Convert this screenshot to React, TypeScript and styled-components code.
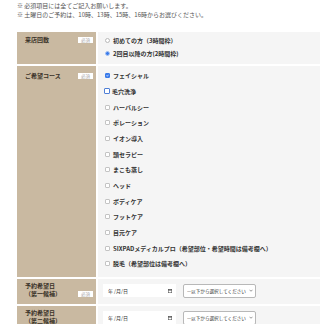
import React from 'react';
import styled, { createGlobalStyle } from 'styled-components';

const GlobalStyle = createGlobalStyle`
    html, body {
        margin: 0;
        padding: 0;
        background: #fff;
    }
    body {
        font-family: "Noto Sans CJK JP", "Noto Sans", sans-serif;
        color: #333;
    }
`;

const Page = styled.div`
    width: 320px;
    overflow: hidden;
`;

const Notes = styled.div`
    padding: 1px 0 0 17px;
    font-size: 6px;
    line-height: 9px;
    color: #555;
    white-space: nowrap;
`;

const Table = styled.div`
    margin: 13px 0 0 17px;
    display: flex;
    flex-direction: column;
    gap: 2px;
`;

const Row = styled.div`
    display: grid;
    grid-template-columns: 79px 1fr;
    column-gap: 2px;
`;

const LabelCell = styled.div<{ $pt: number }>`
    background: #c9b9a1;
    padding: ${p => p.$pt}px 3px 3px 8px;
    display: flex;
    align-items: flex-start;
`;

const LabelHead = styled.div`
    width: 100%;
    display: flex;
    justify-content: space-between;
    align-items: flex-end;
    font-size: 6px;
    line-height: 8px;
    font-weight: 700;
    color: #3a3228;
`;

const Badge = styled.span`
    flex-shrink: 0;
    background: #fff;
    color: #a9a9a9;
    font-size: 4.5px;
    line-height: 6px;
    height: 6px;
    padding: 0 3px;
    margin-bottom: 1px;
    font-weight: 400;
`;

const FieldCell = styled.div<{ $pt: number; $pb: number; $pl: number }>`
    background: #f5f5f5;
    padding: ${p => p.$pt}px 0 ${p => p.$pb}px ${p => p.$pl}px;
`;

const Option = styled.label<{ $h: number }>`
    display: flex;
    align-items: center;
    height: ${p => p.$h}px;
    font-size: 6px;
    font-weight: 700;
    color: #333;
    white-space: nowrap;
`;

const Radio = styled.span<{ $on?: boolean }>`
    box-sizing: border-box;
    width: 5px;
    height: 5px;
    margin: 0 3px 0 2px;
    border-radius: 50%;
    border: 1px solid ${p => (p.$on ? '#a8c4f3' : '#b9b9b9')};
    background: ${p => (p.$on ? '#3a7bea' : '#fff')};
`;

const Check = styled.span<{ $on?: boolean; $focus?: boolean }>`
    box-sizing: border-box;
    display: flex;
    align-items: center;
    justify-content: center;
    width: ${p => (p.$focus ? 6 : 5)}px;
    height: ${p => (p.$focus ? 6 : 5)}px;
    margin: 0 ${p => (p.$focus ? 2 : 3)}px 0 ${p => (p.$focus ? 1 : 2)}px;
    border-radius: 1px;
    border: 1px solid ${p => (p.$focus ? '#4f7fd6' : p.$on ? '#3a7bea' : '#c4c4c4')};
    background: ${p => (p.$on ? '#3a7bea' : '#fff')};
`;

const DateLine = styled.div`
    display: flex;
    align-items: center;
    gap: 7px;
`;

const DateBox = styled.div`
    box-sizing: border-box;
    width: 73px;
    height: 13px;
    background: #fff;
    display: flex;
    align-items: center;
    justify-content: space-between;
    padding: 0 4px 0 5px;
    font-size: 5px;
    color: #333;
`;

const SelectBox = styled.div`
    box-sizing: border-box;
    width: 73px;
    height: 14px;
    background: #fff;
    border: 1px solid #b8b8b8;
    border-radius: 2px;
    display: flex;
    align-items: center;
    justify-content: space-between;
    padding: 0 2px 0 3px;
    font-size: 4.6px;
    color: #333;
    white-space: nowrap;
    overflow: hidden;
`;

const SelectText = styled.span`
    overflow: hidden;
    flex: 1;
`;

const courses = [
    'フェイシャル',
    '毛穴洗浄',
    'ハーバルシー',
    'ポレーション',
    'イオン導入',
    '頭セラピー',
    'まこも蒸し',
    'ヘッド',
    'ボディケア',
    'フットケア',
    '目元ケア',
    'SIXPADメディカルプロ（希望部位・希望時間は備考欄へ）',
    '脱毛（希望部位は備考欄へ）',
];

const Tick = () => (
    <svg width="3" height="3" viewBox="0 0 6 6">
        <polyline points="1,3 2.5,4.5 5,1.5" fill="none" stroke="#fff" strokeWidth="1.4" />
    </svg>
);

const CalendarIcon = () => (
    <svg width="4" height="4" viewBox="0 0 8 8">
        <rect x="0.5" y="1" width="7" height="6.5" fill="none" stroke="#444" strokeWidth="1" />
        <rect x="0.5" y="1" width="7" height="2" fill="#444" />
    </svg>
);

const Chevron = () => (
    <svg width="4" height="3" viewBox="0 0 8 6">
        <polyline points="1,1.5 4,4.5 7,1.5" fill="none" stroke="#555" strokeWidth="1.2" />
    </svg>
);

const DateRow: React.FC<{ title: string; sub: string; required?: boolean }> = ({ title, sub, required }) => (
    <Row>
        <LabelCell $pt={3}>
            <LabelHead>
                <span>{title}<br />{sub}</span>
                {required && <Badge>必須</Badge>}
            </LabelHead>
        </LabelCell>
        <FieldCell $pt={5} $pb={6} $pl={5}>
            <DateLine>
                <DateBox>
                    <span>年 /月/日</span>
                    <CalendarIcon />
                </DateBox>
                <SelectBox>
                    <SelectText>—以下から選択してください</SelectText>
                    <Chevron />
                </SelectBox>
            </DateLine>
        </FieldCell>
    </Row>
);

export default function App() {
    return (
        <Page>
            <GlobalStyle />
            <Notes>
                <div>※ 必須項目には全てご記入お願いします。</div>
                <div>※ 土曜日のご予約は、10時、13時、15時、16時からお選びください。</div>
            </Notes>
            <Table>
                <Row>
                    <LabelCell $pt={4}>
                        <LabelHead>
                            <span>来店回数</span>
                            <Badge>必須</Badge>
                        </LabelHead>
                    </LabelCell>
                    <FieldCell $pt={2} $pb={4} $pl={5}>
                        <Option $h={13}><Radio />初めての方（3時間枠）</Option>
                        <Option $h={13}><Radio $on />2回目以降の方(2時間枠)</Option>
                    </FieldCell>
                </Row>
                <Row>
                    <LabelCell $pt={6}>
                        <LabelHead>
                            <span>ご希望コース</span>
                            <Badge>必須</Badge>
                        </LabelHead>
                    </LabelCell>
                    <FieldCell $pt={2} $pb={5} $pl={5}>
                        {courses.map((c, i) => (
                            <Option key={c} $h={15.67}>
                                <Check $on={i === 0} $focus={i === 1}>{i === 0 && <Tick />}</Check>
                                {c}
                            </Option>
                        ))}
                    </FieldCell>
                </Row>
                <DateRow title="予約希望日" sub="（第一候補）" required />
                <DateRow title="予約希望日" sub="（第二候補）" />
            </Table>
        </Page>
    );
}
